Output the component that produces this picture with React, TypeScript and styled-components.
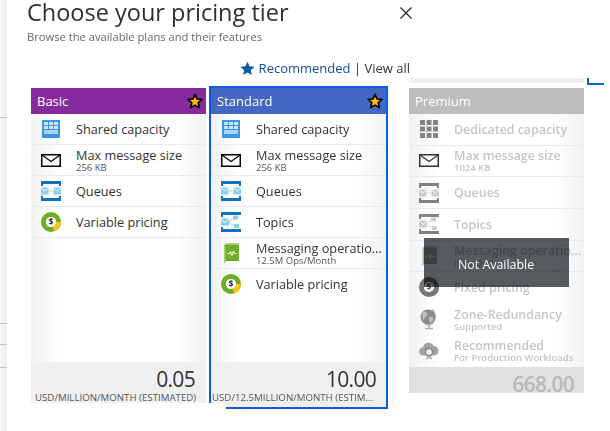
import * as React from "react";
import styled, { createGlobalStyle } from "styled-components";

type IconName = "shared" | "dedicated" | "mail" | "queues" | "topics" | "messaging" | "pricing" | "fixed" | "globe" | "cloud";

interface IFeature {
    icon: IconName;
    title: string;
    sub?: string;
    plain?: boolean;
}

const GlobalStyle = createGlobalStyle`
    html, body {
        margin: 0;
        padding: 0;
        background: #fff;
        overflow: hidden;
    }
    body {
        font-family: "Open Sans", "Noto Sans", sans-serif;
    }
`;

const Page = styled.div`
    display: flex;
    width: 610px;
    height: 431px;
    overflow: hidden;
`;

const PageEdge = styled.div`
    flex: 0 0 7px;
    display: flex;
    flex-direction: column;
    padding-top: 117px;
    background: linear-gradient(to right, #f8f8f8, #ececec);
`;

const EdgeLine = styled.div<{ $gap: number }>`
    height: 1px;
    margin-bottom: ${props => props.$gap}px;
    background: #c4c4c4;
`;

const Dialog = styled.div`
    flex: 1;
    min-width: 0;
    padding-left: 20px;
    background: #fff;
`;

const TitleRow = styled.div`
    display: flex;
    justify-content: space-between;
    align-items: flex-start;
    width: 385px;
    height: 29px;
`;

const Title = styled.h1`
    margin: 0;
    font-size: 23.5px;
    font-weight: 400;
    line-height: 25px;
    color: #2f2f2f;
    white-space: nowrap;
`;

const CloseButton = styled.button`
    display: flex;
    margin: 7px 0 0 0;
    padding: 0;
    border: 0;
    background: none;
`;

const Subtitle = styled.div`
    font-size: 11.2px;
    line-height: 16px;
    color: #666;
`;

const FilterRow = styled.div`
    display: flex;
    justify-content: flex-end;
    align-items: center;
    gap: 4px;
    width: 383px;
    height: 18px;
    margin-top: 14px;
    font-size: 13px;
    color: #333;
`;

const FilterLink = styled.span`
    color: #0f4f9f;
`;

const Cards = styled.div`
    display: flex;
    align-items: flex-start;
    margin: 1px 0 0 4px;
`;

const BasicCard = styled.div`
    position: relative;
    z-index: 1;
    display: flex;
    flex-direction: column;
    flex: 0 0 175px;
    height: 315px;
    margin-top: 10px;

    &::after {
        content: "";
        position: absolute;
        top: 100%;
        left: 0;
        width: 195px;
        height: 8px;
        background: #fff;
    }
`;

const StandardCard = styled.div`
    display: flex;
    flex-direction: column;
    flex: 0 0 179px;
    height: 323px;
    margin: 8px 0 0 3px;
    box-sizing: border-box;
    border: 2px solid #0b5fdb;
`;

const PremiumColumn = styled.div`
    position: relative;
    display: flex;
    flex-direction: column;
    flex: 0 0 175px;
    margin-left: 21px;
`;

const PremiumStrip = styled.div`
    height: 5px;
    margin-bottom: 5px;
    background: #f0f0f0;
`;

const PremiumCard = styled.div`
    display: flex;
    flex-direction: column;
    height: 305px;
`;

const NextCardCorner = styled.div`
    flex: 0 0 17px;
    box-sizing: border-box;
    height: 7px;
    margin-left: 3px;
    border-left: 2px solid #0b5fdb;
    border-bottom: 2px solid #0b5fdb;
`;

const CardHeader = styled.div<{ $color: string }>`
    flex: 0 0 26px;
    display: flex;
    align-items: center;
    justify-content: space-between;
    padding: 0 3px 0 6px;
    font-size: 13px;
    color: #fff;
    background: ${props => props.$color};
`;

const CardBody = styled.div`
    flex: 1;
    min-height: 0;
    display: flex;
    flex-direction: column;
    background: linear-gradient(to right, #f2f2f2, #fff 17%, #fff 83%, #f2f2f2);
`;

const Row = styled.div<{ $plain?: boolean; $stretch?: boolean }>`
    flex: ${props => props.$stretch ? "1" : "0 0 31px"};
    box-sizing: border-box;
    display: grid;
    grid-template-columns: 40px minmax(0, 1fr);
    column-gap: 5px;
    align-items: center;
    border-bottom: 1px solid ${props => props.$plain ? "transparent" : "#e9e9f5"};
`;

const IconSlot = styled.div<{ $muted?: boolean }>`
    display: flex;
    justify-content: center;
    filter: ${props => props.$muted ? "grayscale(1) opacity(.8)" : "none"};
`;

const RowText = styled.div<{ $muted?: boolean }>`
    min-width: 0;
    padding-right: ${props => props.$muted ? 0 : 3}px;
`;

const RowTitle = styled.div<{ $muted?: boolean }>`
    font-size: ${props => props.$muted ? "12.4px" : "12.7px"};
    line-height: 15px;
    color: ${props => props.$muted ? "#c6c6c6" : "#333"};
    font-weight: ${props => props.$muted ? 600 : 400};
    white-space: nowrap;
    overflow: hidden;
    text-overflow: ellipsis;
`;

const RowSub = styled.div<{ $muted?: boolean }>`
    font-size: 9.5px;
    line-height: 10px;
    color: ${props => props.$muted ? "#c6c6c6" : "#555"};
    font-weight: ${props => props.$muted ? 600 : 400};
    white-space: nowrap;
`;

const CardFooter = styled.div<{ $height: number; $muted?: boolean }>`
    flex: 0 0 ${props => props.$height}px;
    overflow: hidden;
    background: ${props => props.$muted ? "#e0e0e0" : "#f0f0f0"};
`;

const Price = styled.div<{ $inset: number; $muted?: boolean }>`
    padding: 4px ${props => props.$inset}px 0 0;
    font-size: 21px;
    letter-spacing: -.7px;
    line-height: 26px;
    text-align: right;
    color: ${props => props.$muted ? "#b8b8b8" : "#333"};
    font-weight: ${props => props.$muted ? 600 : 400};
`;

const PriceUnit = styled.div<{ $left: number; $width: number }>`
    width: ${props => props.$width}px;
    margin-left: ${props => props.$left}px;
    font-size: 9.7px;
    line-height: 11px;
    color: #555;
    white-space: nowrap;
    overflow: hidden;
    text-overflow: ellipsis;
`;

const Tooltip = styled.div`
    position: absolute;
    top: 160px;
    left: 15px;
    display: flex;
    align-items: center;
    box-sizing: border-box;
    width: 145px;
    height: 49px;
    padding: 3px 0 0 34px;
    font-size: 12.4px;
    color: #fff;

    &::before {
        content: "";
        position: absolute;
        inset: 0;
        background: #565b5f;
        mix-blend-mode: multiply;
    }
`;

const TooltipLabel = styled.span`
    position: relative;
`;

const FeatureIcon = ({ name }: { name: IconName }) => {
    switch (name) {
        case "shared":
            return (
                <svg width="18" height="18" viewBox="0 0 18 18">
                    <rect width="18" height="18" fill="#3a96e4" />
                    <path d="M2 2h4v3H2zM7 2h4v3H7zM12 2h4v3h-4zM2 6h4v3H2zM7 6h4v3H7zM12 6h4v3h-4z" fill="#cfe6fa" />
                    <rect x="2" y="10" width="14" height="4" fill="#a9d3f5" />
                </svg>
            );
        case "dedicated":
            return (
                <svg width="18" height="18" viewBox="0 0 18 18" fill="#666">
                    <path d="M0 0h5v5H0zM6.500 0h5v5h-5zM13 0h5v5h-5zM0 6.500h5v5H0zM6.500 6.500h5v5h-5zM13 6.500h5v5h-5zM0 13h5v5H0zM6.500 13h5v5h-5zM13 13h5v5h-5z" />
                </svg>
            );
        case "mail":
            return (
                <svg width="20" height="13" viewBox="0 0 20 13" fill="none">
                    <rect x=".75" y=".75" width="18.500" height="11.500" fill="#fff" stroke="#000" strokeWidth="1.500" />
                    <path d="M1 1l9 6.500L19 1" stroke="#000" strokeWidth="1.200" />
                </svg>
            );
        case "queues":
            return (
                <svg width="20" height="20" viewBox="0 0 20 20" fill="none">
                    <path d="M0 5V0h20v5h-2V3H2v2zM0 15v5h20v-5h-2v2H2v-2z" fill="#0f72c4" />
                    <rect x="0" y="6.500" width="7.500" height="7" fill="#8ccdf0" />
                    <rect x="12.500" y="6.500" width="7.500" height="7" fill="#8ccdf0" />
                    <path d="M0 7l3.750 3L7.500 7M12.500 7l3.750 3L20 7" stroke="#fff" strokeWidth=".8" />
                    <path d="M8.500 10h3" stroke="#b8d98a" strokeWidth="1.200" />
                </svg>
            );
        case "topics":
            return (
                <svg width="20" height="20" viewBox="0 0 20 20" fill="none">
                    <path d="M0 5V0h20v3H2v2zM0 15v5h20v-3H2v-2z" fill="#0f72c4" />
                    <path d="M7 10l6-4.500M7 10l6 4" stroke="#b8d98a" strokeWidth="1" />
                    <rect x="0" y="6.500" width="8" height="7" fill="#8ccdf0" />
                    <path d="M0 7l4 3.500L8 7" stroke="#fff" strokeWidth=".8" />
                    <rect x="12" y="3.500" width="5" height="4" fill="#8ccdf0" />
                    <rect x="13" y="12" width="5" height="4" fill="#8ccdf0" />
                </svg>
            );
        case "messaging":
            return (
                <svg width="16" height="20" viewBox="0 0 16 20" fill="none">
                    <path d="M1 2.500L3 .5h13v17.500H3l-2 1.500z" fill="#6fae2c" />
                    <path d="M1 2.500h1.500V20H1z" fill="#a5cf6b" />
                    <rect x="3" y="0.500" width="13" height="1.500" fill="#a8d070" />
                    <path d="M4.500 10.500h2l1-2 1.500 4 1.500-4.500 1 2.500h2" stroke="#fff" strokeWidth="1" />
                </svg>
            );
        case "pricing":
            return <PriceDonut ring="#6eae25" accent="#ffc20e" />;
        case "fixed":
            return <PriceDonut ring="#555" accent="#555" />;
        case "globe":
            return (
                <svg width="18" height="21" viewBox="0 0 18 21" fill="none">
                    <circle cx="8" cy="8" r="7.500" fill="#6f6f6f" />
                    <path d="M3 3c3-1 5 0 4 3s-3 2-3 5-3-3-1-8zM9 8c3-1 5 0 4 3s-3 3-4 1z" fill="#b0b0b0" />
                    <path d="M12 .5c4 3 5 10 .5 14-2 1.500-5 2-7 1" stroke="#999" strokeWidth="1.200" />
                    <path d="M9 16v2.500M5 19.500h8" stroke="#999" strokeWidth="1.500" />
                </svg>
            );
        case "cloud":
            return (
                <svg width="20" height="20" viewBox="0 0 20 20" fill="none">
                    <path d="M4.500 14.500a4 4 0 0 1-.5-8A5.500 5.500 0 0 1 14.500 5a4.800 4.800 0 0 1 1 9.500z" fill="#8a8a8a" />
                    <path d="M8 14l-1 5 3-1.500 3 1.500-1-5z" fill="#aaa" />
                    <circle cx="10" cy="11" r="3.500" fill="#eee" stroke="#666" strokeWidth="1.300" />
                </svg>
            );
    }
};

const PriceDonut = ({ ring, accent }: { ring: string; accent: string }) => (
    <svg width="20" height="20" viewBox="0 0 20 20" fill="none">
        <circle cx="10" cy="10" r="7.500" stroke={ring} strokeWidth="5" />
        <path d="M17.500 10a7.500 7.500 0 0 1-5 7" stroke={accent} strokeWidth="5" />
        <circle cx="10" cy="10" r="5" fill="#fff" />
        <text x="10" y="13" fontSize="8" fontWeight="700" textAnchor="middle" fill="#222" fontFamily="Open Sans, sans-serif">$</text>
    </svg>
);

const FilterStar = () => (
    <svg width="15" height="15" viewBox="0 0 24 24"><path d="M12 1l3.300 7.400 8 .8-6 5.400 1.700 7.900L12 18.500l-7 4 1.700-7.900-6-5.400 8-.8z" fill="#0f5aa8" /></svg>
);

const TierStar = () => (
    <svg width="16" height="16" viewBox="0 0 24 24"><path d="M12 2l3 6.900 7.400.7-5.600 5 1.700 7.300L12 18.100l-6.500 3.800 1.700-7.300-5.600-5L9 8.900z" fill="#ffb900" stroke="#000" strokeWidth="2.400" strokeLinejoin="round" /></svg>
);

const basicFeatures: Array<IFeature> = [
    { icon: "shared", title: "Shared capacity" },
    { icon: "mail", title: "Max message size", sub: "256 KB" },
    { icon: "queues", title: "Queues" },
    { icon: "pricing", title: "Variable pricing" },
];

const standardFeatures: Array<IFeature> = [
    { icon: "shared", title: "Shared capacity" },
    { icon: "mail", title: "Max message size", sub: "256 KB" },
    { icon: "queues", title: "Queues" },
    { icon: "topics", title: "Topics" },
    { icon: "messaging", title: "Messaging operations", sub: "12.5M Ops/Month" },
    { icon: "pricing", title: "Variable pricing", plain: true },
];

const premiumFeatures: Array<IFeature> = [
    { icon: "dedicated", title: "Dedicated capacity" },
    { icon: "mail", title: "Max message size", sub: "1024 KB" },
    { icon: "queues", title: "Queues" },
    { icon: "topics", title: "Topics" },
    { icon: "messaging", title: "Messaging operations", sub: "Included" },
    { icon: "fixed", title: "Fixed pricing", plain: true },
    { icon: "globe", title: "Zone-Redundancy", sub: "Supported", plain: true },
    { icon: "cloud", title: "Recommended", sub: "For Production Workloads", plain: true },
];

const FeatureRows = ({ features, muted }: { features: Array<IFeature>; muted?: boolean }) => (
    <CardBody>
        {features.map(feature => (
            <Row key={feature.title} $plain={feature.plain} $stretch={muted}>
                <IconSlot $muted={muted}><FeatureIcon name={feature.icon} /></IconSlot>
                <RowText $muted={muted}>
                    <RowTitle $muted={muted}>{feature.title}</RowTitle>
                    {feature.sub && <RowSub $muted={muted}>{feature.sub}</RowSub>}
                </RowText>
            </Row>
        ))}
    </CardBody>
);

export default function App(): React.JSX.Element {
    return (
        <Page>
            <GlobalStyle />
            <PageEdge>
                <EdgeLine $gap={205} />
                <EdgeLine $gap={20} />
                <EdgeLine $gap={22} />
                <EdgeLine $gap={0} />
            </PageEdge>
            <Dialog>
                <TitleRow>
                    <Title>Choose your pricing tier</Title>
                    <CloseButton aria-label="Close">
                        <svg width="12" height="12" viewBox="0 0 12 12"><path d="M.5.5l11 11M11.500.5l-11 11" stroke="#222" strokeWidth="1.100" /></svg>
                    </CloseButton>
                </TitleRow>
                <Subtitle>Browse the available plans and their features</Subtitle>
                <FilterRow>
                    <FilterStar />
                    <span><FilterLink>Recommended</FilterLink> | View all</span>
                </FilterRow>
                <Cards>
                    <BasicCard>
                        <CardHeader $color="#862a9e">Basic<TierStar /></CardHeader>
                        <FeatureRows features={basicFeatures} />
                        <CardFooter $height={41}>
                            <Price $inset={11}>0.05</Price>
                            <PriceUnit $left={4} $width={168}>USD/MILLION/MONTH (ESTIMATED)</PriceUnit>
                        </CardFooter>
                    </BasicCard>
                    <StandardCard>
                        <CardHeader $color="#4467c4">Standard<TierStar /></CardHeader>
                        <FeatureRows features={standardFeatures} />
                        <CardFooter $height={45}>
                            <Price $inset={10}>10.00</Price>
                            <PriceUnit $left={1} $width={166}>USD/12.5MILLION/MONTH (ESTIMATED)</PriceUnit>
                        </CardFooter>
                    </StandardCard>
                    <PremiumColumn>
                        <PremiumStrip />
                        <PremiumCard>
                            <CardHeader $color="#bdbdbd">Premium</CardHeader>
                            <FeatureRows features={premiumFeatures} muted />
                            <CardFooter $height={26} $muted>
                                <Price $inset={10} $muted>668.00</Price>
                            </CardFooter>
                        </PremiumCard>
                        <Tooltip><TooltipLabel>Not Available</TooltipLabel></Tooltip>
                    </PremiumColumn>
                    <NextCardCorner />
                </Cards>
            </Dialog>
        </Page>
    );
}
